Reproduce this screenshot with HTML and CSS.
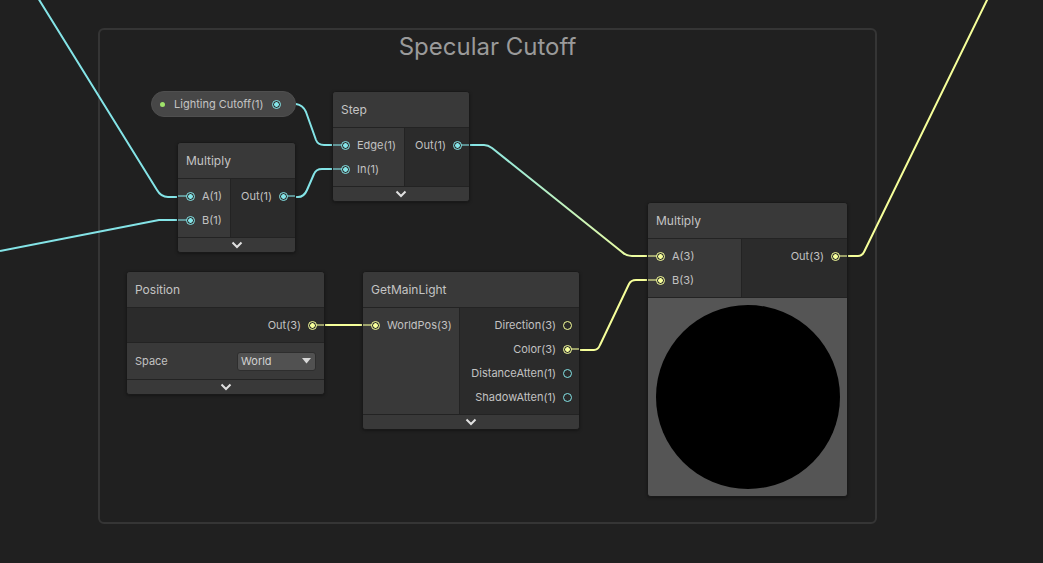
FILE: index.html
```html
<!DOCTYPE html>
<html>
<head>
<meta charset="utf-8">
<link rel="stylesheet" href="styles.css">
</head>
<body>
<div class="canvas">
  <div class="group"><div class="group-title">Specular Cutoff</div></div>

  <svg class="wires" width="1043" height="563" viewBox="0 0 1043 563">
    <defs>
      <linearGradient id="g5" gradientUnits="userSpaceOnUse" x1="470" y1="0" x2="650" y2="0">
        <stop offset="0" stop-color="#84e4e7"/>
        <stop offset="1" stop-color="#f6ff9a"/>
      </linearGradient>
    </defs>
    <g fill="none" stroke-width="2" stroke-linejoin="round">
      <path stroke="#84e4e7" d="M38,-2 L157,190 Q161,197 168,197 L178,197"/>
      <path stroke="#84e4e7" d="M0,251 L159,220 L178,220"/>
      <path stroke="#84e4e7" d="M296,104 Q303,105 306,112 L316,140 Q318,145 324,145 L333,145"/>
      <path stroke="#84e4e7" d="M296,197 L298,197 Q304,197 307,190 L314,174 Q316,169 322,169 L333,169"/>
      <path stroke="url(#g5)" d="M470,145 L484,145 Q488,145 492,148 L622,252 Q626,256 632,256 L648,256"/>
      <path stroke="#f6ff9a" d="M325,325 L363,325"/>
      <path stroke="#f6ff9a" d="M580,350 L594,350 Q598,350 600,345 L629,284 Q631,280 636,280 L648,280"/>
      <path stroke="#f6ff9a" d="M848,256 L858,256 Q862,256 864,252 L988,-2"/>
    </g>
  </svg>

  <div class="prop">
    <span class="prop-dot"></span>
    <span class="prop-label">Lighting Cutoff(1)</span>
    <span class="dot cyan on"></span>
  </div>

  <div class="node n-step">
    <div class="title">Step</div>
    <div class="ports">
      <div class="inputs">
        <div class="port"><span class="cap cyan"></span><span class="dot cyan on"></span>Edge(1)</div>
        <div class="port"><span class="cap cyan"></span><span class="dot cyan on"></span>In(1)</div>
      </div>
      <div class="outputs">
        <div class="port">Out(1)<span class="dot cyan on"></span><span class="cap cyan"></span></div>
      </div>
    </div>
    <div class="foot"><svg width="12" height="8" viewBox="0 0 12 8"><path d="M1.5,1.5 L6,6 L10.5,1.5" fill="none" stroke="#e0e0e0" stroke-width="2"/></svg></div>
  </div>

  <div class="node n-mul1">
    <div class="title">Multiply</div>
    <div class="ports">
      <div class="inputs">
        <div class="port"><span class="cap cyan"></span><span class="dot cyan on"></span>A(1)</div>
        <div class="port"><span class="cap cyan"></span><span class="dot cyan on"></span>B(1)</div>
      </div>
      <div class="outputs">
        <div class="port">Out(1)<span class="dot cyan on"></span><span class="cap cyan"></span></div>
      </div>
    </div>
    <div class="foot"><svg width="12" height="8" viewBox="0 0 12 8"><path d="M1.5,1.5 L6,6 L10.5,1.5" fill="none" stroke="#e0e0e0" stroke-width="2"/></svg></div>
  </div>

  <div class="node n-pos">
    <div class="title">Position</div>
    <div class="outputs full">
      <div class="port">Out(3)<span class="dot yellow on"></span><span class="cap yellow"></span></div>
    </div>
    <div class="field-row">
      <span class="field-label">Space</span>
      <div class="dropdown"><span>World</span><svg width="9" height="6" viewBox="0 0 9 6"><path d="M0,0 L9,0 L4.5,5.5 Z" fill="#d8d8d8"/></svg></div>
    </div>
    <div class="foot"><svg width="12" height="8" viewBox="0 0 12 8"><path d="M1.5,1.5 L6,6 L10.5,1.5" fill="none" stroke="#e0e0e0" stroke-width="2"/></svg></div>
  </div>

  <div class="node n-light">
    <div class="title">GetMainLight</div>
    <div class="ports">
      <div class="inputs">
        <div class="port"><span class="cap yellow"></span><span class="dot yellow on"></span>WorldPos(3)</div>
      </div>
      <div class="outputs">
        <div class="port">Direction(3)<span class="dot yellow"></span></div>
        <div class="port">Color(3)<span class="dot yellow on"></span><span class="cap yellow"></span></div>
        <div class="port">DistanceAtten(1)<span class="dot cyan"></span></div>
        <div class="port">ShadowAtten(1)<span class="dot cyan"></span></div>
      </div>
    </div>
    <div class="foot"><svg width="12" height="8" viewBox="0 0 12 8"><path d="M1.5,1.5 L6,6 L10.5,1.5" fill="none" stroke="#e0e0e0" stroke-width="2"/></svg></div>
  </div>

  <div class="node n-mul2">
    <div class="title">Multiply</div>
    <div class="ports">
      <div class="inputs">
        <div class="port"><span class="cap yellow"></span><span class="dot yellow on"></span>A(3)</div>
        <div class="port"><span class="cap yellow"></span><span class="dot yellow on"></span>B(3)</div>
      </div>
      <div class="outputs">
        <div class="port">Out(3)<span class="dot yellow on"></span><span class="cap yellow"></span></div>
      </div>
    </div>
    <div class="preview"><div class="sphere"></div></div>
  </div>
</div>
</body>
</html>
```

FILE: styles.css
```css
* { box-sizing: border-box; }
html, body {
  margin: 0;
  padding: 0;
  background: #202020;
  overflow: hidden;
}
body {
  width: 1043px;
  height: 563px;
  font-family: Inter, "Noto Sans", "Liberation Sans", sans-serif;
}
.canvas {
  position: relative;
  width: 1043px;
  height: 563px;
  background: #202020;
}
.group {
  position: absolute;
  left: 98px;
  top: 28px;
  width: 779px;
  height: 496px;
  border: 2px solid #353535;
  border-radius: 6px;
}
.group-title {
  text-align: center;
  font-size: 24px;
  color: #9a9a9a;
  margin-top: 2px;
  line-height: 30px;
}
.wires {
  position: absolute;
  left: 0;
  top: 0;
}

/* property pill */
.prop {
  position: absolute;
  left: 151px;
  top: 91px;
  width: 145px;
  height: 26px;
  border-radius: 13px;
  background: #474747;
  border: 1px solid #4f4f4f;
  display: flex;
  align-items: center;
  padding-left: 8px;
  font-size: 11px;
  color: #c4c4c4;
}
.prop-dot {
  width: 5px;
  height: 5px;
  border-radius: 50%;
  background: #9fe36a;
  margin-right: 9px;
}
.prop-label { margin-right: 8px; }

/* ports */
.dot {
  width: 9px;
  height: 9px;
  border-radius: 50%;
  border: 1.6px solid;
  flex: none;
  background: #2a2a2a;
  position: relative;
  z-index: 1;
}
.dot.cyan { border-color: #84e4e7; }
.dot.yellow { border-color: #f6ff9a; }
.dot.cyan.on { background: radial-gradient(circle, #84e4e7 0 2px, #2f2f2f 2.6px); }
.dot.yellow.on { background: radial-gradient(circle, #f6ff9a 0 2px, #2f2f2f 2.6px); }

.cap {
  position: absolute;
  top: 11px;
  height: 2px;
  width: 9px;
  opacity: 0.55;
}
.cap.cyan { background: #84e4e7; }
.cap.yellow { background: #f6ff9a; }
.inputs .cap { left: 0; }
.outputs .cap { right: 0; }

/* nodes */
.node {
  position: absolute;
  background: #393939;
  border: 1px solid #191919;
  border-radius: 4px;
  overflow: hidden;
  box-shadow: 0 1px 3px rgba(0, 0, 0, 0.35);
}
.title {
  height: 36px;
  display: flex;
  align-items: center;
  padding-left: 8px;
  font-size: 12px;
  color: #c4c4c4;
  background: #393939;
  border-bottom: 1px solid #232323;
}
.ports { display: flex; }
.inputs {
  background: #393939;
  padding: 5px 0;
  border-right: 1px solid #232323;
  flex: none;
}
.outputs {
  background: #2b2b2b;
  padding: 5px 0;
  flex: 1;
}
.port {
  position: relative;
  height: 24px;
  display: flex;
  align-items: center;
  gap: 7px;
  font-size: 11px;
  color: #c2c2c2;
  white-space: nowrap;
}
.inputs .port { padding-left: 8px; padding-right: 6px; }
.outputs .port { justify-content: flex-end; padding-right: 7px; }

.foot {
  height: 15px;
  border-top: 1px solid #232323;
  background: #393939;
  display: flex;
  align-items: center;
  justify-content: center;
}

.n-step { left: 332px; top: 91px; width: 138px; }
.n-step .inputs { width: 72px; }

.n-mul1 { left: 177px; top: 142px; width: 119px; }
.n-mul1 .inputs { width: 53px; }

.n-pos { left: 126px; top: 271px; width: 199px; }
.field-row {
  height: 37px;
  border-top: 1px solid #232323;
  display: flex;
  align-items: center;
  justify-content: space-between;
  padding: 0 8px;
  font-size: 11px;
  color: #c2c2c2;
}
.dropdown {
  width: 79px;
  height: 19px;
  background: #515151;
  border: 1px solid #2e2e2e;
  border-radius: 3px;
  display: flex;
  align-items: center;
  justify-content: space-between;
  padding: 0 4px 0 3px;
  color: #d2d2d2;
}

.n-light { left: 362px; top: 271px; width: 218px; }
.n-light .inputs { width: 97px; }

.n-mul2 { left: 647px; top: 202px; width: 201px; }
.n-mul2 .inputs { width: 94px; }
.preview {
  height: 199px;
  background: #555555;
  border-top: 1px solid #232323;
  display: flex;
  align-items: center;
  justify-content: center;
}
.sphere {
  width: 184px;
  height: 184px;
  border-radius: 50%;
  background: #000;
}
```
